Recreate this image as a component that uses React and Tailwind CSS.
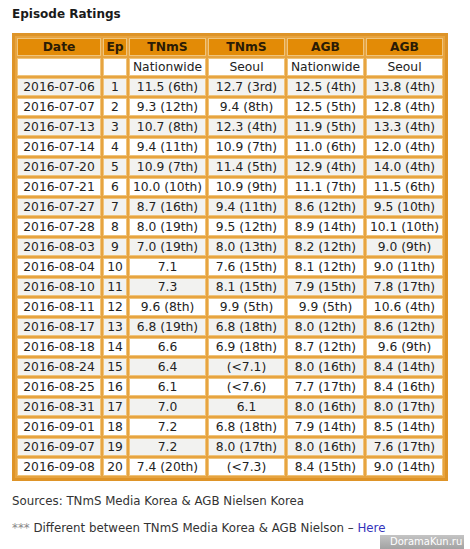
import React from "react";

const rows = [
  ["2016-07-06", 1, "11.5 (6th)", "12.7 (3rd)", "12.5 (4th)", "13.8 (4th)"],
  ["2016-07-07", 2, "9.3 (12th)", "9.4 (8th)", "12.5 (5th)", "12.8 (4th)"],
  ["2016-07-13", 3, "10.7 (8th)", "12.3 (4th)", "11.9 (5th)", "13.3 (4th)"],
  ["2016-07-14", 4, "9.4 (11th)", "10.9 (7th)", "11.0 (6th)", "12.0 (4th)"],
  ["2016-07-20", 5, "10.9 (7th)", "11.4 (5th)", "12.9 (4th)", "14.0 (4th)"],
  ["2016-07-21", 6, "10.0 (10th)", "10.9 (9th)", "11.1 (7th)", "11.5 (6th)"],
  ["2016-07-27", 7, "8.7 (16th)", "9.4 (11th)", "8.6 (12th)", "9.5 (10th)"],
  ["2016-07-28", 8, "8.0 (19th)", "9.5 (12th)", "8.9 (14th)", "10.1 (10th)"],
  ["2016-08-03", 9, "7.0 (19th)", "8.0 (13th)", "8.2 (12th)", "9.0 (9th)"],
  ["2016-08-04", 10, "7.1", "7.6 (15th)", "8.1 (12th)", "9.0 (11th)"],
  ["2016-08-10", 11, "7.3", "8.1 (15th)", "7.9 (15th)", "7.8 (17th)"],
  ["2016-08-11", 12, "9.6 (8th)", "9.9 (5th)", "9.9 (5th)", "10.6 (4th)"],
  ["2016-08-17", 13, "6.8 (19th)", "6.8 (18th)", "8.0 (12th)", "8.6 (12th)"],
  ["2016-08-18", 14, "6.6", "6.9 (18th)", "8.7 (12th)", "9.6 (9th)"],
  ["2016-08-24", 15, "6.4", "(<7.1)", "8.0 (16th)", "8.4 (14th)"],
  ["2016-08-25", 16, "6.1", "(<7.6)", "7.7 (17th)", "8.4 (16th)"],
  ["2016-08-31", 17, "7.0", "6.1", "8.0 (16th)", "8.0 (17th)"],
  ["2016-09-01", 18, "7.2", "6.8 (18th)", "7.9 (14th)", "8.5 (14th)"],
  ["2016-09-07", 19, "7.2", "8.0 (17th)", "8.0 (16th)", "7.6 (17th)"],
  ["2016-09-08", 20, "7.4 (20th)", "(<7.3)", "8.4 (15th)", "9.0 (14th)"],
];

const cell = "border border-[#efc47c] p-0 h-[18px] leading-[16px] text-center whitespace-nowrap";

function App() {
  return (
    <div className="relative w-[470px] h-[549px] bg-white text-[#222] font-['DejaVu_Sans',Verdana,sans-serif] text-[12.3px] overflow-hidden">
      <div className="pl-3 pt-[6px]">
        <h2 className="font-bold text-[12px] leading-[16px] text-[#1a1a1a]">Episode Ratings</h2>

        <div className="mt-[11px] w-[436px] border-[3px] border-[#de9428]">
          <table className="w-full table-fixed border-separate border-spacing-[2px] bg-[#e7a440]">
            <colgroup>
              <col className="w-[84px]" />
              <col className="w-[24px]" />
              <col />
              <col />
              <col />
              <col />
            </colgroup>
            <thead>
              <tr>
                {["Date", "Ep", "TNmS", "TNmS", "AGB", "AGB"].map((h, i) => (
                  <th key={i} className={`${cell} bg-[#e38b06] font-bold text-[#2b1b05]`}>
                    {h}
                  </th>
                ))}
              </tr>
              <tr>
                {["", "", "Nationwide", "Seoul", "Nationwide", "Seoul"].map((h, i) => (
                  <td key={i} className={`${cell} bg-white`}>
                    {h}
                  </td>
                ))}
              </tr>
            </thead>
            <tbody>
              {rows.map((r, idx) => (
                <tr key={idx} className={idx % 2 === 0 ? "bg-[#f2f2f0]" : "bg-white"}>
                  {r.map((v, i) => (
                    <td key={i} className={cell}>
                      {v}
                    </td>
                  ))}
                </tr>
              ))}
            </tbody>
          </table>
        </div>

        <p className="mt-[12px] text-[11.8px] leading-[16px] text-[#333]">Sources: TNmS Media Korea &amp; AGB Nielsen Korea</p>
        <p className="mt-[11px] text-[11.8px] leading-[16px] text-[#333]">
          <span className="text-[#888]">***</span> Different between TNmS Media Korea &amp; AGB Nielson –{" "}
          <a href="#" className="text-[#3333bb]">Here</a>
        </p>
      </div>

      {/* watermark */}
      <div className="absolute left-[380px] top-[535px] w-[84px] h-[14px] whitespace-nowrap bg-gradient-to-b from-[#c4c4c4] to-[#a2a2a2] text-white text-[10px] leading-[14px] pl-[10px] font-['DejaVu_Sans',sans-serif]">
        DoramaKun.ru
      </div>
    </div>
  );
}

export default App;
